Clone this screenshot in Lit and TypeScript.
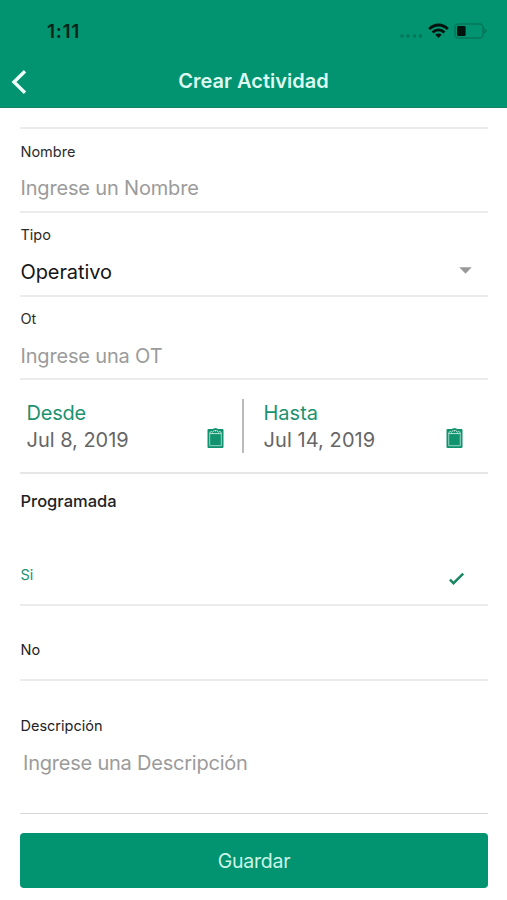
import { LitElement, html, css, svg } from "lit";
import { customElement, property } from "lit/decorators.js";

const clipboard = html`<svg class="clip" width="17" height="20" viewBox="0 0 17 20">
  ${svg`<path d="M1.5 1 H5.5 L8.5 0 L11.5 1 H15.5 Q16.5 1 16.5 2 V19 Q16.5 20 15.5 20 H1.5 Q.5 20 .5 19 V2 Q.5 1 1.5 1 Z" fill="#12936f"/>
  <path d="M2.7 4.2 V17.7 H14.3 V4.2" fill="none" stroke="#a5dcc9" stroke-width=".9"/>
  <path d="M3 5.6 H14 M3 4.2 L4.8 3.4 M14 4.2 L12.2 3.4" fill="none" stroke="#c9ede0" stroke-width=".9"/>
  <path d="M5.4 4.6 L7.3 2.2 M11.6 4.6 L9.7 2.2" fill="none" stroke="#d8f3ea" stroke-width=".9"/>
  <circle cx="8.5" cy="2.8" r=".7" fill="#d8f3ea"/>`}
</svg>`;

@customElement("form-field")
export class FormField extends LitElement {
  @property() label = "";
  @property() placeholder = "";
  @property() value = "";
  @property({ type: Boolean }) select = false;

  static styles = css`
    :host { display: block; box-sizing: border-box; height: 84px; padding-top: 13px; border-bottom: 2px solid #ebebeb; }
    .label { font-size: 14.5px; line-height: 20px; color: #2b2b2b; padding-left: .5px; }
    .control { display: flex; justify-content: space-between; align-items: center; margin-top: 12px; padding: 0 16px 0 .5px;
      font-size: 20px; line-height: 28px; color: #151515; letter-spacing: -0.1px; }
    :host(.tight) .control { margin-top: 13px; }
    .placeholder { color: #9b9b9b; letter-spacing: -0.17px; }
    .arrow { margin-top: -4px; }
  `;

  render() {
    return html`
      <div class="label">${this.label}</div>
      <div class="control">
        ${this.value
          ? html`<span>${this.value}</span>`
          : html`<span class="placeholder">${this.placeholder}</span>`}
        ${this.select
          ? html`<svg class="arrow" width="13" height="7" viewBox="0 0 13 7"><path d="M.3 .3H12.7L6.5 6.7Z" fill="#999"/></svg>`
          : null}
      </div>
    `;
  }
}

@customElement("date-field")
export class DateField extends LitElement {
  @property() label = "";
  @property() value = "";

  static styles = css`
    :host { display: flex; justify-content: space-between; align-items: flex-end; box-sizing: border-box; }
    .text { font-size: 20px; line-height: 27px; color: #666; letter-spacing: -0.02px; }
    .label { color: #1c9270; letter-spacing: -0.2px; }
    .clip { display: block; margin-bottom: 6px; }
    :host(.to) .text { letter-spacing: .08px; }
    :host(.to) .label { letter-spacing: 0; }
  `;

  render() {
    return html`
      <div class="text">
        <div class="label">${this.label}</div>
        <div>${this.value}</div>
      </div>
      ${clipboard}
    `;
  }
}

@customElement("app-root")
export class AppRoot extends LitElement {
  static styles = css`
    :host { display: block; height: 900px; overflow: hidden; background: #fff;
      font-family: Inter, "Liberation Sans", sans-serif; color: #222; }
    header { height: 108px; box-sizing: border-box; background: #029370; border-bottom: 1px solid #168262; }
    .status { height: 62px; display: flex; align-items: center; justify-content: space-between; padding: 0 20px 0 47px; }
    .time { font-size: 19px; font-weight: 600; letter-spacing: .7px; color: #06231b; }
    .system { display: flex; align-items: center; }
    .nav { height: 38px; display: grid; grid-template-columns: 60px 1fr 60px; align-items: center; }
    .back { display: block; margin-left: 11px; margin-top: 1px; }
    .title { text-align: center; font-size: 20px; line-height: 28px; font-weight: 600; color: #dcfaf1; }
    main { margin: 0 19px 0 20px; padding-top: 19px; }
    .form { border-top: 2px solid #ebebeb; }
    .tight { padding-top: 12px; }
    .last { height: 83px; }
    .dates { display: flex; box-sizing: border-box; height: 94px; padding: 20px 25px 0 6.5px; border-bottom: 2px solid #e6e6e6; }
    .dates date-field { height: 54px; }
    .from { width: 197px; }
    .to { flex: 1; }
    .bar { width: 2px; height: 54px; margin: -1px 19.5px 0 18.5px; background: #bbb; }
    .heading { height: 57px; line-height: 55px; padding-left: .5px; font-size: 16.5px; font-weight: 450; }
    .option { display: flex; justify-content: space-between; align-items: center; box-sizing: border-box;
      padding: 0 23px 0 .5px; font-size: 14.5px; border-bottom: 2px solid #ebebeb; }
    .yes { height: 75px; padding-top: 14px; color: #1c9270; }
    .no { height: 75px; padding-top: 14px; }
    .check { margin-top: 9px; }
    .description { box-sizing: border-box; height: 133px; padding-top: 35px; border-bottom: 1px solid #d8d8d8; }
    .label { padding-left: .5px; font-size: 14.5px; line-height: 20px; }
    .placeholder { margin: 13px 0 0 3px; font-size: 20px; line-height: 28px; letter-spacing: -0.22px; color: #9b9b9b; }
    button { display: block; width: 468px; height: 55px; margin-top: 19px; padding: 1px 0 0; border: 0; border-radius: 4px;
      background: #029370; color: #c9f5e7; font: 400 19.5px/54px Inter, "Liberation Sans", sans-serif; letter-spacing: -0.25px; }
  `;

  render() {
    return html`
      <header>
        <div class="status">
          <span class="time">1:11</span>
          <span class="system">
            <svg width="87" height="18" viewBox="0 0 87 18">
              <g fill="#047556">
                <circle cx="2" cy="14" r="1.7"/><circle cx="8" cy="14" r="1.7"/>
                <circle cx="14.5" cy="14" r="1.7"/><circle cx="20.5" cy="14" r="1.7"/>
              </g>
              <g fill="none" stroke="#02130e" stroke-width="2.8">
                <path d="M29.2 7.1 C34.4 1.6 42.6 1.6 47.8 7.1"/>
                <path d="M32.6 10.4 C36 7 41 7 44.4 10.4"/>
              </g>
              <path d="M35.3 12.7 C37 11.1 40 11.1 41.7 12.7 L38.5 16 Z" fill="#02130e"/>
              <rect x="55" y="2" width="28" height="14" rx="3.6" fill="none" stroke="#08775a" stroke-width="1.6"/>
              <path d="M84.2 6 L87 9 L84.2 12 Z" fill="#08775a"/>
              <rect x="57" y="4" width="8.6" height="10" rx="1.3" fill="#02130e"/>
            </svg>
          </span>
        </div>
        <div class="nav">
          <svg class="back" width="17" height="26" viewBox="0 0 17 26">
            <path d="M14 2.3 L3 13 L14 23.7" fill="none" stroke="#effffa" stroke-width="3.4"/>
          </svg>
          <span class="title">Crear Actividad</span>
        </div>
      </header>
      <main>
        <div class="form">
          <form-field label="Nombre" placeholder="Ingrese un Nombre"></form-field>
          <form-field class="tight" label="Tipo" value="Operativo" select></form-field>
          <form-field class="tight last" label="Ot" placeholder="Ingrese una OT"></form-field>
          <div class="dates">
            <date-field class="from" label="Desde" value="Jul 8, 2019"></date-field>
            <div class="bar"></div>
            <date-field class="to" label="Hasta" value="Jul 14, 2019"></date-field>
          </div>
          <div class="heading">Programada</div>
          <div class="option yes">
            <span>Si</span>
            <svg class="check" width="16" height="14" viewBox="0 0 16 14">
              <path d="M.9 7.6 L4.5 11.2 L14.2 1.6" fill="none" stroke="#16875f" stroke-width="2.4"/>
            </svg>
          </div>
          <div class="option no"><span>No</span></div>
          <div class="description">
            <div class="label">Descripción</div>
            <div class="placeholder">Ingrese una Descripción</div>
          </div>
        </div>
        <button>Guardar</button>
      </main>
    `;
  }
}
